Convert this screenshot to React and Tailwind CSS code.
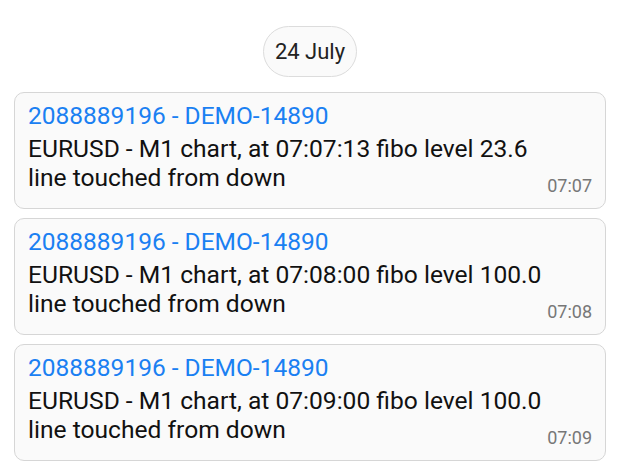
const messages = [
  { body: 'EURUSD - M1 chart, at 07:07:13 fibo level 23.6', time: '07:07' },
  { body: 'EURUSD - M1 chart, at 07:08:00 fibo level 100.0', time: '07:08' },
  { body: 'EURUSD - M1 chart, at 07:09:00 fibo level 100.0', time: '07:09' },
];

function MessageCard({ body, time }) {
  return (
    <div className="rounded-[10px] border border-[#d6d6d6] bg-[#fafafa] pl-[13px] pr-[13px] pt-[8px] flex items-end">
      <div className="flex-1 min-w-0 pb-[16px]">
        <div className="text-[24.5px] leading-[29px] text-[#1a80f2]">2088889196 - DEMO-14890</div>
        <div className="mt-[4px] text-[24.6px] leading-[29px] text-[#111]">
          {body}
          <br />
          line touched from down
        </div>
      </div>
      <div className="text-[18px] leading-[20px] text-[#777] mb-[12px]">{time}</div>
    </div>
  );
}

export default function App() {
  return (
    <div className="w-[625px] h-[476px] bg-white overflow-hidden" style={{ fontFamily: 'Roboto, "Noto Sans", sans-serif' }}>
      <div className="flex justify-center pt-[26px] pl-[14px] pr-[19px]">
        <div className="rounded-full border border-[#dcdcdc] bg-[#fafafa] h-[51px] px-[11px] flex items-center text-[22px] text-[#222]">
          24 July
        </div>
      </div>
      <div className="flex flex-col gap-[9px] pt-[15px] pl-[14px] pr-[19px]">
        {messages.map((m) => (
          <MessageCard key={m.time} body={m.body} time={m.time} />
        ))}
      </div>
    </div>
  );
}
